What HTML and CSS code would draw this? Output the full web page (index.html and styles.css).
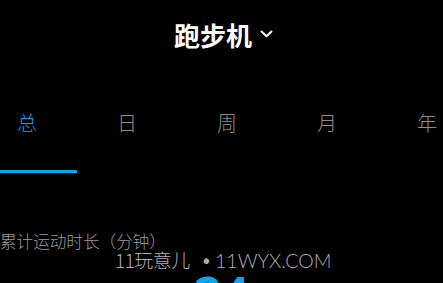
FILE: index.html
```html
<!DOCTYPE html>
<html lang="zh">
<head>
<meta charset="utf-8">
<link rel="stylesheet" href="styles.css">
</head>
<body>
<div class="page">
  <header class="header">
    <span class="title">跑步机</span>
    <svg class="chev" width="13" height="8" viewBox="0 0 13 8"><path d="M1.5 1.5 L6.5 6.2 L11.5 1.5" fill="none" stroke="#fff" stroke-width="2" stroke-linecap="round" stroke-linejoin="round"/></svg>
  </header>
  <nav class="tabs">
    <div class="tab active">总</div>
    <div class="tab">日</div>
    <div class="tab">周</div>
    <div class="tab">月</div>
    <div class="tab">年</div>
  </nav>
  <section class="stat">
    <div class="label">累计运动时长（分钟）</div>
    <div class="value">24</div>
  </section>
  <div class="watermark"><span class="wm-cn">11玩意儿</span><span class="wm-dot">•</span><span class="wm-en">11WYX.COM</span></div>
</div>
</body>
</html>
```
FILE: styles.css
```css
html, body {
  margin: 0;
  padding: 0;
  background: #000;
}
body {
  width: 443px;
  height: 283px;
  overflow: hidden;
  font-family: "Noto Sans CJK SC", "Noto Sans", sans-serif;
}
.page {
  position: relative;
  width: 443px;
  height: 283px;
  overflow: hidden;
}
.header {
  height: 70px;
  display: flex;
  align-items: center;
  justify-content: center;
  gap: 8px;
  padding-left: 4px;
}
.title {
  color: #fff;
  font-size: 26px;
  font-weight: 700;
  line-height: 34px;
}
.chev {
  display: block;
  margin-top: -2px;
}
.tabs {
  display: flex;
  margin-left: -23px;
}
.tab {
  flex: 0 0 100px;
  box-sizing: border-box;
  height: 103px;
  padding-top: 39px;
  text-align: center;
  font-size: 20px;
  font-weight: 300;
  line-height: 28px;
  color: #8c8c8c;
  border-bottom: 3px solid transparent;
}
.tab.active {
  color: #0aa4f2;
  border-bottom-color: #0aa4f2;
}
.stat {
  margin-top: 56px;
}
.label {
  font-size: 16.6px;
  font-weight: 300;
  line-height: 24px;
  color: #9a9a9a;
  white-space: nowrap;
}
.value {
  text-align: center;
  font-family: "Noto Sans", sans-serif;
  font-weight: 700;
  font-size: 48px;
  line-height: 48px;
  color: #0aa4f2;
  margin-top: 17px;
}
.watermark {
  position: absolute;
  left: 115px;
  top: 248px;
  display: flex;
  align-items: baseline;
  line-height: 24px;
  color: #b3aab9;
  white-space: nowrap;
}
.wm-cn {
  font-family: "Noto Sans CJK SC", sans-serif;
  font-size: 19px;
  font-weight: 300;
  letter-spacing: -0.5px;
}
.wm-dot {
  font-family: "DejaVu Sans", sans-serif;
  font-size: 19px;
  margin: 0 3px 0 11px;
}
.wm-en {
  font-family: "Lato", sans-serif;
  font-size: 19.5px;
  font-weight: 300;
}
```
